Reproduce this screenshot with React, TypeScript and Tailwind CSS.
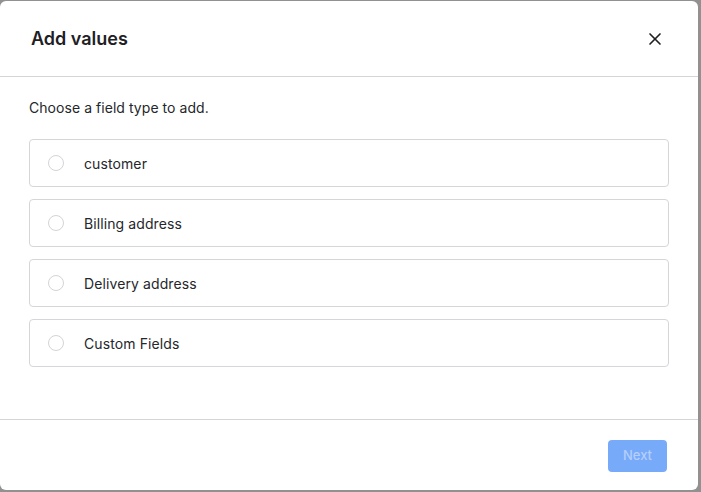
import { X } from "lucide-react"

const options = ["customer", "Billing address", "Delivery address", "Custom Fields"]

function OptionRow({ label }: { label: string }) {
  return (
    <label className="flex h-[48px] items-center rounded-[4px] border border-[#d5d6d9] bg-white pl-[18px]">
      <span className="h-[16px] w-[16px] rounded-full border border-[#d3d4d7] bg-white" />
      <span className="ml-[20px] text-[14px] font-normal tracking-[0.1px] text-[#25272b]">{label}</span>
    </label>
  )
}

export default function App() {
  return (
    <div
      className="h-[492px] w-[701px] bg-[#919191] pt-[1px]"
      style={{ fontFamily: "Inter, 'Noto Sans', sans-serif" }}
    >
      <div className="flex h-[489px] w-[698px] flex-col rounded-[6px] bg-white">
        {/* header */}
        <div className="flex h-[76px] items-center justify-between border-b border-[#d4d5d8] pl-[31px] pr-[33px]">
          <h2 className="text-[18px] font-semibold text-[#1e2024]">Add values</h2>
          <button className="text-[#1e2024]">
            <X size={20} strokeWidth={2} />
          </button>
        </div>

        {/* body */}
        <div className="flex-1 px-[29px] pt-[21px]">
          <p className="text-[14px] leading-[20px] tracking-[0.05px] text-[#25272b]">Choose a field type to add.</p>
          <div className="mt-[21px] flex w-[640px] flex-col gap-[12px]">
            {options.map((o) => (
              <OptionRow key={o} label={o} />
            ))}
          </div>
        </div>

        {/* footer */}
        <div className="flex h-[71px] items-start justify-end border-t border-[#d4d5d8] pr-[31px] pt-[20px]">
          <button className="h-[32px] w-[59px] rounded-[4px] bg-[#78aafa] text-[13px] font-medium text-[#b4cffc]">
            Next
          </button>
        </div>
      </div>
    </div>
  )
}
